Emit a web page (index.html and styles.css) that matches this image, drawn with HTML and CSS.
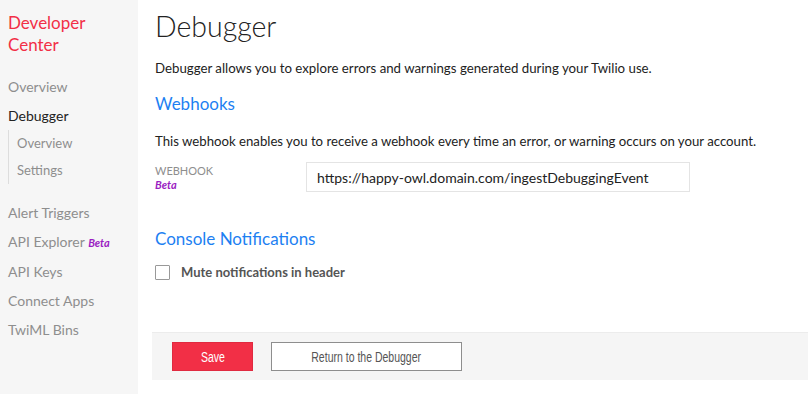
FILE: index.html
```html
<!DOCTYPE html>
<html lang="en">
<head>
    <meta charset="UTF-8">
    <title>Debugger</title>
    <link rel="stylesheet" href="styles.css">
</head>
<body>
    <div class="layout">
        <!-- Sidebar -->
        <nav class="sidebar">
            <div class="brand">Developer<br>Center</div>
            <ul class="nav">
                <li>Overview</li>
                <li class="active">Debugger</li>
                <li class="sub">
                    <ul>
                        <li>Overview</li>
                        <li>Settings</li>
                    </ul>
                </li>
                <li class="gap">Alert Triggers</li>
                <li>API Explorer <span class="beta">Beta</span></li>
                <li>API Keys</li>
                <li>Connect Apps</li>
                <li>TwiML Bins</li>
            </ul>
        </nav>

        <!-- Main -->
        <main class="main">
            <h1>Debugger</h1>
            <p class="intro">Debugger allows you to explore errors and warnings generated during your Twilio use.</p>

            <h2>Webhooks</h2>
            <p class="desc">This webhook enables you to receive a webhook every time an error, or warning occurs on your account.</p>
            <div class="field">
                <div class="label">
                    <span>WEBHOOK</span>
                    <span class="beta">Beta</span>
                </div>
                <input type="text" value="https://happy-owl.domain.com/ingestDebuggingEvent">
            </div>

            <h2 class="console">Console Notifications</h2>
            <label class="check">
                <span class="box"></span>
                Mute notifications in header
            </label>

            <div class="actions">
                <button class="save"><span>Save</span></button>
                <button class="return"><span>Return to the Debugger</span></button>
            </div>
        </main>
    </div>
</body>
</html>
```

FILE: styles.css
```css
html, body {
    margin: 0;
    padding: 0;
    height: 100%;
    overflow: hidden;
    font-family: Lato, "Open Sans", sans-serif;
    background: #fff;
    color: #222;
}
.layout {
    display: flex;
    height: 100%;
}
.sidebar {
    width: 138px;
    flex-shrink: 0;
    background: #f6f6f6;
    padding: 12px 0 0 8px;
    box-sizing: border-box;
}
.brand {
    color: #f22f46;
    font-size: 17px;
    line-height: 22px;
}
.nav {
    list-style: none;
    margin: 16px 0 0;
    padding: 0;
}
.nav li {
    font-size: 14px;
    line-height: 29px;
    color: #8e8e8e;
}
.nav li.active {
    color: #222;
}
.nav .sub ul {
    list-style: none;
    margin: 0 0 14px;
    padding: 0 0 0 8px;
    border-left: 1px solid #ddd;
}
.nav .sub li {
    font-size: 13px;
    line-height: 27px;
}
.beta {
    color: #9b1ec2;
    font-style: italic;
    font-weight: bold;
    font-size: 11px;
}
.main {
    flex: 1;
    padding: 0 0 0 17px;
}
h1 {
    font-size: 28.5px;
    font-weight: 300;
    margin: 9px 0 0;
    line-height: 34px;
}
.intro {
    font-size: 13.25px;
    line-height: 17px;
    margin: 17px 0 0;
}
h2 {
    color: #1d7ff2;
    font-size: 17px;
    line-height: 22px;
    font-weight: normal;
    margin: 16px 0 0;
}
.desc {
    font-size: 13.2px;
    line-height: 17px;
    margin: 18px 0 0;
}
.field {
    display: flex;
    margin-top: 12px;
}
.field .label {
    width: 151px;
    display: flex;
    flex-direction: column;
    font-size: 11px;
    color: #8e8e8e;
    padding-top: 2px;
}
.field .label .beta {
    margin-top: 1px;
}
.field input {
    width: 384px;
    height: 30px;
    box-sizing: border-box;
    border: 1px solid #e4e4e4;
    padding: 0 10px;
    font-family: Lato, sans-serif;
    font-size: 14px;
    color: #222;
}
h2.console {
    margin-top: 36px;
}
.check {
    display: flex;
    align-items: center;
    margin-top: 14px;
    font-size: 13px;
    font-weight: bold;
    color: #555;
}
.check .box {
    width: 13px;
    height: 13px;
    border: 1px solid #999;
    border-radius: 1px;
    margin-right: 11px;
}
.actions {
    display: flex;
    gap: 18px;
    margin: 52px 0 0 -3px;
    padding: 9px 20px;
    background: #f5f5f5;
    border-top: 1px solid #ececec;
}
.actions button {
    height: 29px;
    font-family: "Liberation Sans", sans-serif;
    font-size: 14px;
    cursor: pointer;
}
.actions button span {
    display: inline-block;
    transform: scaleX(0.75);
}
.save {
    width: 81px;
    background: #f22f46;
    border: 1px solid #e02a40;
    color: #fff;
}
.return {
    width: 191px;
    background: #fff;
    border: 1px solid #8e8e8e;
    color: #555;
}
```
